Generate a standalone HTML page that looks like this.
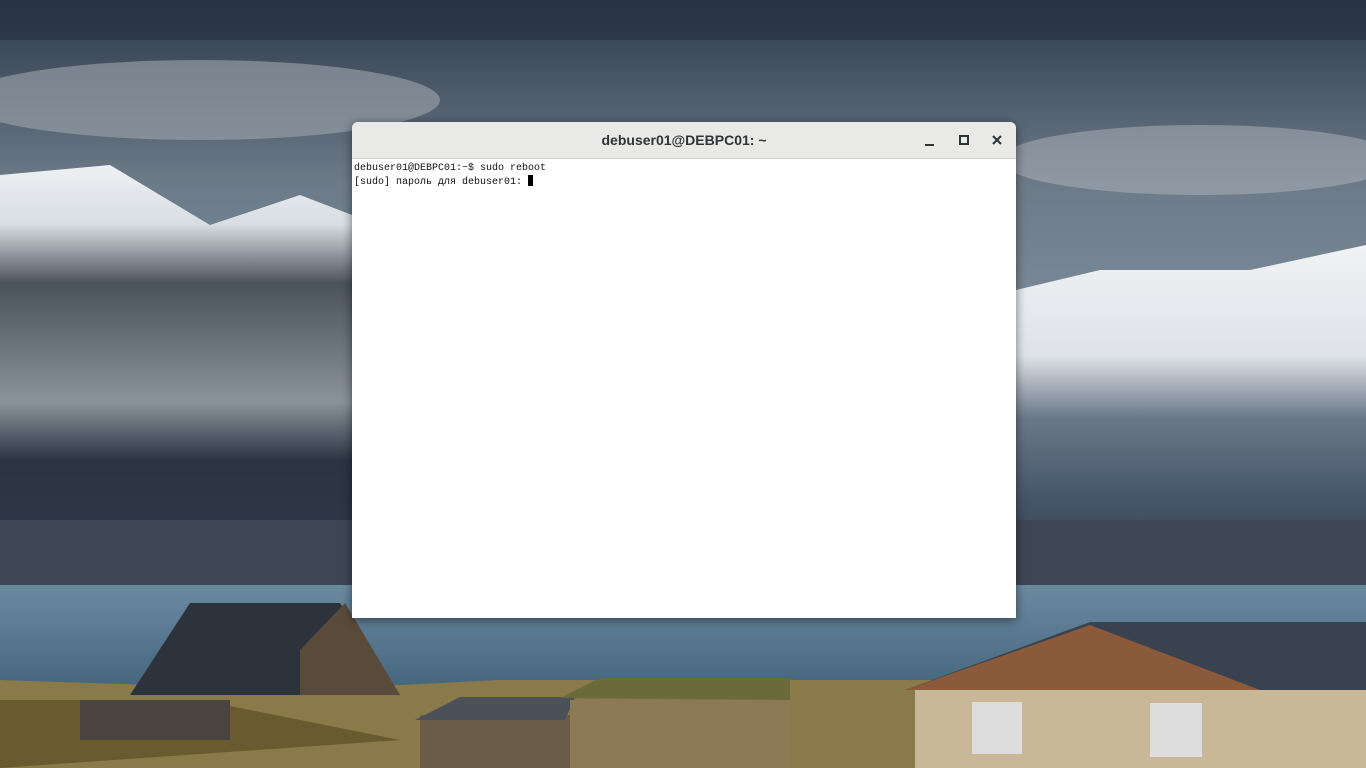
<!DOCTYPE html>
<html><head><meta charset="utf-8"><style>
*{margin:0;padding:0}
body{width:1366px;height:768px;overflow:hidden;position:relative;background:#3a4a5c;font-family:"Liberation Sans",sans-serif}
svg.bg{position:absolute;left:0;top:0}
.win{position:absolute;left:352px;top:122px;width:664px;height:496px;background:#fff;border-radius:6px 6px 0 0;overflow:hidden;box-shadow:0 2px 10px rgba(0,0,0,.5)}
.tb{height:36px;background:#e9e9e8;border-bottom:1px solid #cfcfcd;position:relative}
.tb .t{position:absolute;left:0;right:0;top:10px;text-align:center;font-size:14px;font-weight:bold;color:#2e3436}
.term{font-family:"Liberation Mono","DejaVu Sans Mono",monospace;font-size:10px;line-height:13px;color:#111;padding:3px 2px;white-space:pre}
.cur{display:inline-block;width:5px;height:11px;background:#000;vertical-align:-2px}
</style></head><body>
<svg class="bg" width="1366" height="768">
<defs>
<linearGradient id="sky" x1="0" y1="0" x2="0" y2="1"><stop offset="0" stop-color="#2e3a4a"/><stop offset=".3" stop-color="#6c7a88"/><stop offset=".6" stop-color="#7f909f"/><stop offset="1" stop-color="#a8b4bd"/></linearGradient>
<linearGradient id="sea" x1="0" y1="0" x2="0" y2="1"><stop offset="0" stop-color="#6a8aa0"/><stop offset="1" stop-color="#44667c"/></linearGradient>
<linearGradient id="ml" x1="0" y1="0" x2="0" y2="1"><stop offset="0" stop-color="#eef1f3"/><stop offset=".15" stop-color="#d8dde2"/><stop offset=".3" stop-color="#4a525c"/><stop offset=".6" stop-color="#8a929a"/><stop offset=".75" stop-color="#2a3442"/><stop offset="1" stop-color="#2e3848"/></linearGradient>
<linearGradient id="mr" x1="0" y1="0" x2="0" y2="1"><stop offset="0" stop-color="#f0f2f4"/><stop offset=".35" stop-color="#dfe3e8"/><stop offset=".55" stop-color="#6a7888"/><stop offset=".8" stop-color="#46566a"/><stop offset="1" stop-color="#3a4452"/></linearGradient>
</defs>
<rect width="1366" height="600" fill="url(#sky)"/>
<ellipse cx="200" cy="100" rx="240" ry="40" fill="#9ea6ad" opacity=".6"/>
<ellipse cx="1200" cy="160" rx="200" ry="35" fill="#b0b6bc" opacity=".5"/>
<rect x="0" y="0" width="1366" height="40" fill="#252f3d" opacity=".6"/>
<polygon points="0,175 110,165 210,225 300,195 352,215 352,560 0,560" fill="url(#ml)"/>
<polygon points="1016,290 1100,270 1250,270 1366,245 1366,560 1016,560" fill="url(#mr)"/>
<rect x="0" y="520" width="1366" height="65" fill="#3e4656"/>
<rect x="0" y="585" width="1366" height="105" fill="url(#sea)"/>
<polygon points="0,680 300,690 500,680 950,680 1366,690 1366,768 0,768" fill="#8a7a4a"/>
<polygon points="0,700 200,700 400,740 0,768" fill="#6a5a30"/>
<polygon points="130,695 190,603 340,603 400,695" fill="#2c333c"/>
<polygon points="300,695 300,650 345,603 400,695" fill="#5a4a3a"/>
<rect x="80" y="700" width="150" height="40" fill="#4a4440"/>
<rect x="420" y="715" width="150" height="53" fill="#6a5c48"/>
<polygon points="415,720 460,697 575,697 565,720" fill="#4c5058"/>
<rect x="570" y="700" width="220" height="68" fill="#8c7a56"/>
<polygon points="560,698 600,678 790,678 790,700" fill="#6a6a3a"/>
<polygon points="905,690 1090,622 1366,622 1366,690" fill="#3a4250"/>
<rect x="915" y="690" width="451" height="78" fill="#c8b898"/>
<polygon points="905,690 1090,625 1260,690" fill="#8a5a3a"/>
<rect x="972" y="702" width="50" height="52" fill="#ddd"/>
<rect x="1150" y="703" width="52" height="54" fill="#ddd"/>
</svg>
<div class="win">
<div class="tb"><div class="t">debuser01@DEBPC01: ~</div>
<svg style="position:absolute;left:570px;top:12px" width="90" height="14"><rect x="3" y="10" width="9" height="2" fill="#2e3436"/><rect x="38" y="2" width="8" height="8" fill="none" stroke="#2e3436" stroke-width="2"/><path d="M71 2l8 8M79 2l-8 8" stroke="#2e3436" stroke-width="2"/></svg>
</div>
<div class="term">debuser01@DEBPC01:~$ sudo reboot
[sudo] пароль для debuser01: <span class="cur"></span></div>
</div>
</body></html>
